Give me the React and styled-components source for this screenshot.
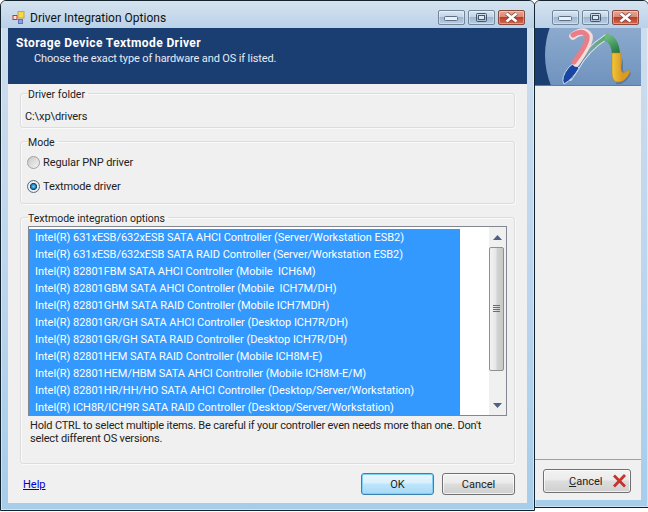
import React from 'react';
import styled, { createGlobalStyle } from 'styled-components';

const GlobalStyle = createGlobalStyle`
  html, body { margin: 0; padding: 0; background: #fff; }
  body { font-family: Roboto, "Noto Sans", sans-serif; font-size: 11px; color: #111; }
`;

const Desktop = styled.div`
  position: relative;
  width: 648px;
  height: 512px;
  overflow: hidden;
  background: #fff;
`;

const Frame = styled.div`
  position: absolute;
  top: 0;
  left: ${(p) => p.$left}px;
  width: ${(p) => p.$width}px;
  height: ${(p) => p.$height}px;
  box-sizing: border-box;
  display: flex;
  flex-direction: column;
  border: 1px solid #14242f;
  border-radius: 6px 6px 0 0;
  background: linear-gradient(180deg, #cfdeec 0, #bcd5ee 55%, #a6cdea 100%);
  box-shadow: inset 0 0 0 1px rgba(255, 255, 255, 0.45);
`;

const TitleBar = styled.div`
  flex: none;
  height: 27px;
  box-sizing: border-box;
  display: flex;
  align-items: center;
  padding: 6px 9px 0 11px;
  background: linear-gradient(180deg, #d5e3f0 0, #c8daec 50%, #b9d1e8 100%);
  border-radius: 5px 5px 0 0;
`;

const TitleText = styled.span`
  margin-left: 5px;
  font-size: 12px;
  color: #111;
`;

const CaptionGroup = styled.div`
  margin-left: auto;
  display: flex;
  gap: 3px;
`;

const CaptionBtn = styled.div`
  width: 27px;
  height: 15px;
  box-sizing: border-box;
  display: flex;
  align-items: center;
  justify-content: center;
  border: 1px solid ${(p) => (p.$close ? '#8a4a3e' : '#71859b')};
  border-radius: 2px;
  background: ${(p) =>
    p.$close
      ? 'linear-gradient(180deg, #e3a796 0, #d88a78 45%, #bf3d28 50%, #cf6a52 100%)'
      : 'linear-gradient(180deg, #dce7f2 0, #c3d4e6 45%, #9fb7d0 50%, #b9cde0 100%)'};
  box-shadow: inset 0 0 0 1px rgba(255, 255, 255, 0.35);
`;

const Client = styled.div`
  flex: 1;
  min-height: 0;
  margin: 0 7px 7px ${(p) => (p.$flush ? 0 : 7)}px;
  display: flex;
  flex-direction: column;
  background: #f0f0f0;
`;

const Banner = styled.div`
  flex: none;
  height: 56px;
  box-sizing: border-box;
  padding: 7px 8px;
  background: #1a3d72;
  color: #fff;
`;

const BannerTitle = styled.div`
  font-weight: 700;
  font-size: 12px;
  letter-spacing: 0.4px;
  line-height: 16px;
`;

const BannerSub = styled.div`
  margin-left: 18px;
  line-height: 15px;
  letter-spacing: -0.13px;
  color: #e6ecf4;
`;

const Body = styled.div`
  flex: 1;
  min-height: 0;
  padding: 2px 12px 0 12px;
  display: flex;
  flex-direction: column;
  gap: 6px;
`;

const Group = styled.fieldset`
  margin: 0;
  box-sizing: border-box;
  height: ${(p) => p.$height}px;
  min-width: 0;
  padding: 0 7px;
  border: 1px solid #dddddd;
  border-radius: 3px;
  box-shadow: inset 1px 1px 0 #fafafa, 1px 1px 0 #fafafa;
`;

const GroupLabel = styled.legend`
  padding: 2px 3px 0 0;
  font-size: 10.5px;
  line-height: 13px;
  color: #222;
`;

const PathText = styled.div`
  padding-top: 9px;
  margin-left: -3px;
  line-height: 14px;
  letter-spacing: -0.1px;
  color: #222;
`;

const RadioList = styled.div`
  padding-top: 6px;
  display: flex;
  flex-direction: column;
  gap: 10px;
`;

const RadioRow = styled.div`
  display: flex;
  align-items: center;
  gap: 3px;
  margin-left: -1px;
  height: 14px;
  letter-spacing: -0.1px;
  color: #222;
`;

const RadioDot = styled.span`
  width: 13px;
  height: 13px;
  box-sizing: border-box;
  border-radius: 50%;
  border: 1px solid ${(p) => (p.$on ? '#5a6a7a' : '#a0a0a0')};
  background: ${(p) =>
    p.$on
      ? 'radial-gradient(circle, #7fd0f0 0, #1f7fb8 28%, #123f66 42%, #f0f4f8 50%, #cfd6dc 100%)'
      : 'linear-gradient(135deg, #c8c8c8, #f4f4f4)'};
`;

const ListBox = styled.div`
  height: 190px;
  margin-top: 1px;
  box-sizing: border-box;
  display: flex;
  border: 1px solid #828790;
  background: #fff;
  overflow: hidden;
`;

const Rows = styled.div`
  flex: 1;
  min-width: 0;
  padding-top: 2px;
  overflow: hidden;
`;

const Row = styled.div`
  width: 431px;
  height: 17px;
  box-sizing: border-box;
  padding-left: 6px;
  line-height: 17px;
  letter-spacing: -0.03px;
  white-space: pre;
  background: #3399ff;
  color: #fff;
`;

const ScrollBar = styled.div`
  flex: none;
  width: 17px;
  display: flex;
  flex-direction: column;
  background: #f0f0f0;
`;

const ArrowCell = styled.div`
  flex: none;
  height: 20px;
  display: flex;
  align-items: center;
  justify-content: center;
`;

const Thumb = styled.div`
  flex: none;
  width: 15px;
  height: 124px;
  box-sizing: border-box;
  display: flex;
  align-items: center;
  justify-content: center;
  border: 1px solid #8e8f8f;
  border-radius: 2px;
  background: linear-gradient(90deg, #f3f3f3 0, #e6e6e6 45%, #d2d2d2 55%, #c8c8c8 100%);
`;

const Hint = styled.div`
  margin: 3px 0 0 2px;
  width: 465px;
  line-height: 13px;
  letter-spacing: -0.17px;
  color: #222;
`;

const FooterRow = styled.div`
  flex: none;
  height: 38px;
  padding: 0 12px 0 15px;
  display: flex;
  align-items: center;
  gap: 8px;
`;

const HelpLink = styled.a`
  margin-right: auto;
  color: #0000d0;
  text-decoration: underline;
`;

const PushButton = styled.button`
  width: ${(p) => p.$width || 73}px;
  height: ${(p) => p.$tall || 22}px;
  box-sizing: border-box;
  padding: 0;
  display: flex;
  align-items: center;
  justify-content: center;
  font-family: inherit;
  font-size: 11px;
  color: #222;
  border-radius: 3px;
  border: 1px solid ${(p) => (p.$primary ? '#3c7fb1' : '#707070')};
  background: ${(p) =>
    p.$primary
      ? 'linear-gradient(180deg, #eaf6fd 0, #d9f0fc 45%, #bee6fd 50%, #a7d9f5 100%)'
      : 'linear-gradient(180deg, #f2f2f2 0, #ebebeb 45%, #dddddd 50%, #cfcfcf 100%)'};
  box-shadow: inset 0 0 0 1px ${(p) => (p.$primary ? '#7fd0f5' : 'rgba(255,255,255,0.7)')};
`;

const SideBanner = styled.div`
  flex: none;
  height: 58px;
  background: #1a3d72;
  border-bottom: 1px solid #6b7a8a;
  box-sizing: border-box;
  line-height: 0;
`;

const SideSpacer = styled.div`
  flex: 1;
`;

const SideFooter = styled.div`
  flex: none;
  height: 41px;
  box-sizing: border-box;
  border-top: 1px solid #a0a0a0;
  padding: 9px 0 0 8px;
`;

const CancelWrap = styled.span`
  width: 100%;
  box-sizing: border-box;
  padding-left: 25px;
  display: flex;
  align-items: center;
  gap: 9px;
`;

const Mnemonic = styled.span`
  text-decoration: underline;
`;

const Min = () => (
  <svg width="15" height="7" viewBox="0 0 15 7">
    <rect x="0.5" y="2.5" width="13" height="4" rx="1" fill="#e8eff6" stroke="#5d6f84" />
  </svg>
);

const Max = () => (
  <svg width="11" height="9" viewBox="0 0 11 9">
    <rect x="0.5" y="0.5" width="10" height="8" rx="1" fill="none" stroke="#43566c" />
    <rect x="2.5" y="2.5" width="6" height="4" fill="#dfe8f1" stroke="#43566c" />
  </svg>
);

const CloseX = () => (
  <svg width="17" height="11" viewBox="0 0 17 11">
    <path d="M3.5 1.5 L13.5 9.5 M13.5 1.5 L3.5 9.5" stroke="#7a3a30" strokeWidth="4" />
    <path d="M3.5 1.5 L13.5 9.5 M13.5 1.5 L3.5 9.5" stroke="#fff" strokeWidth="2.8" />
  </svg>
);

const Caption = () => (
  <CaptionGroup>
    <CaptionBtn><Min /></CaptionBtn>
    <CaptionBtn><Max /></CaptionBtn>
    <CaptionBtn $close><CloseX /></CaptionBtn>
  </CaptionGroup>
);

const AppIcon = () => (
  <svg width="13" height="13" viewBox="0 0 13 13">
    <rect x="1" y="4.5" width="4" height="4" fill="#f6e3df" stroke="#c8321f" />
    <rect x="6" y="0.5" width="6" height="6.5" fill="#f7d648" stroke="#c9a63a" />
    <rect x="6.5" y="8.5" width="4" height="4" fill="#8f9fe0" stroke="#5f70c0" />
  </svg>
);

const Logo = () => (
  <svg width="106" height="57" viewBox="0 0 106 57">
    <defs>
      <linearGradient id="disc" x1="0" y1="0" x2="0" y2="1">
        <stop offset="0" stopColor="#a8c0dc" />
        <stop offset="1" stopColor="#557eb0" />
      </linearGradient>
      <linearGradient id="diag" gradientUnits="userSpaceOnUse" x1="36" y1="40" x2="70" y2="9">
        <stop offset="0" stopColor="#3a70b8" />
        <stop offset="0.5" stopColor="#7aa6a4" />
        <stop offset="1" stopColor="#58a868" />
      </linearGradient>
      <linearGradient id="green" gradientUnits="userSpaceOnUse" x1="70" y1="9" x2="80" y2="27">
        <stop offset="0" stopColor="#6ab880" />
        <stop offset="1" stopColor="#1a7038" />
      </linearGradient>
      <linearGradient id="yellow" gradientUnits="userSpaceOnUse" x1="74" y1="0" x2="84" y2="0">
        <stop offset="0" stopColor="#f2c73c" />
        <stop offset="1" stopColor="#dc9a22" />
      </linearGradient>
    </defs>
    <circle cx="91" cy="27" r="81" fill="url(#disc)" />
    <g transform="translate(3 0)">
      {/* shadow under the right stem */}
      <path d="M85 30 L85 42 Q86 49 93 44 L92 48 Q85 58 78 56 Z" fill="#2f4f70" opacity="0.4" />
      {/* diagonal */}
      <path d="M32 50 L38 41 Q48 22 68 9" fill="none" stroke="#eaf0f7" strokeWidth="5.5" strokeLinecap="round" opacity="0.85" />
      <path d="M33 49 L38 41 Q48 22 68 9" fill="none" stroke="url(#diag)" strokeWidth="3.5" strokeLinecap="round" />
      <path d="M26 56 Q22 50 31 39 L36 35 L41 40 Q35 51 26 56 Z" fill="#1745a4" stroke="#c9d6ea" strokeWidth="1" />
      {/* pink hook */}
      <path d="M35 8 Q46 0 51 8 Q53 14 38 35" fill="none" stroke="#f5dcdc" strokeWidth="7.5" strokeLinecap="round" />
      <path d="M35 7 Q45 1 49 8 Q51 14 36 34" fill="none" stroke="#e77e88" strokeWidth="5" strokeLinecap="round" />
      {/* green then yellow */}
      <path d="M67 9 Q77 11 78 26" fill="none" stroke="url(#green)" strokeWidth="8" strokeLinecap="butt" />
      <path d="M74 25 L83 25 L83 41 Q84 48 90 42 L92 44 Q87 55 79 54 Q74 53 74 44 Z" fill="url(#yellow)" stroke="#b98a1e" strokeWidth="0.6" />
    </g>
  </svg>
);

const UpArrow = () => (
  <svg width="9" height="5" viewBox="0 0 9 5"><path d="M0 5 L4.5 0 L9 5 Z" fill="#4d6185" /></svg>
);

const DownArrow = () => (
  <svg width="9" height="5" viewBox="0 0 9 5"><path d="M0 0 L9 0 L4.5 5 Z" fill="#4d6185" /></svg>
);

const Grip = () => (
  <svg width="7" height="8" viewBox="0 0 7 8">
    <path d="M0 0.5 H7 M0 2.5 H7 M0 4.5 H7 M0 6.5 H7" stroke="#6d6d6d" />
  </svg>
);

const RedCross = () => (
  <svg width="15" height="14" viewBox="0 0 15 14">
    <path d="M2 1.5 L13 12.5 M13 1 L2 12.5" stroke="#c8322b" strokeWidth="2.8" />
  </svg>
);

const controllers = [
  'Intel(R) 631xESB/632xESB SATA AHCI Controller (Server/Workstation ESB2)',
  'Intel(R) 631xESB/632xESB SATA RAID Controller (Server/Workstation ESB2)',
  'Intel(R) 82801FBM SATA AHCI Controller (Mobile  ICH6M)',
  'Intel(R) 82801GBM SATA AHCI Controller (Mobile  ICH7M/DH)',
  'Intel(R) 82801GHM SATA RAID Controller (Mobile ICH7MDH)',
  'Intel(R) 82801GR/GH SATA AHCI Controller (Desktop ICH7R/DH)',
  'Intel(R) 82801GR/GH SATA RAID Controller (Desktop ICH7R/DH)',
  'Intel(R) 82801HEM SATA RAID Controller (Mobile ICH8M-E)',
  'Intel(R) 82801HEM/HBM SATA AHCI Controller (Mobile ICH8M-E/M)',
  'Intel(R) 82801HR/HH/HO SATA AHCI Controller (Desktop/Server/Workstation)',
  'Intel(R) ICH8R/ICH9R SATA RAID Controller (Desktop/Server/Workstation)',
];

export default function App() {
  return (
    <Desktop>
      <GlobalStyle />
      <Frame $left={534} $width={115} $height={508}>
        <TitleBar>
          <Caption />
        </TitleBar>
        <Client $flush>
          <SideBanner><Logo /></SideBanner>
          <SideSpacer />
          <SideFooter>
            <PushButton $width={88} $tall={24}>
              <CancelWrap>
                <span><Mnemonic>C</Mnemonic>ancel</span>
                <RedCross />
              </CancelWrap>
            </PushButton>
          </SideFooter>
        </Client>
      </Frame>

      <Frame $left={0} $width={535} $height={511}>
        <TitleBar>
          <AppIcon />
          <TitleText>Driver Integration Options</TitleText>
          <Caption />
        </TitleBar>
        <Client>
          <Banner>
            <BannerTitle>Storage Device Textmode Driver</BannerTitle>
            <BannerSub>Choose the exact type of hardware and OS if listed.</BannerSub>
          </Banner>
          <Body>
            <Group $height={42}>
              <GroupLabel>Driver folder</GroupLabel>
              <PathText>C:\xp\drivers</PathText>
            </Group>
            <Group $height={70}>
              <GroupLabel>Mode</GroupLabel>
              <RadioList>
                <RadioRow><RadioDot />Regular PNP driver</RadioRow>
                <RadioRow><RadioDot $on />Textmode driver</RadioRow>
              </RadioList>
            </Group>
            <Group $height={254}>
              <GroupLabel>Textmode integration options</GroupLabel>
              <ListBox>
                <Rows>
                  {controllers.map((name) => (
                    <Row key={name}>{name}</Row>
                  ))}
                </Rows>
                <ScrollBar>
                  <ArrowCell><UpArrow /></ArrowCell>
                  <Thumb><Grip /></Thumb>
                  <SideSpacer />
                  <ArrowCell><DownArrow /></ArrowCell>
                </ScrollBar>
              </ListBox>
              <Hint>Hold CTRL to select multiple items. Be careful if your controller even needs more than one. Don't select different OS versions.</Hint>
            </Group>
          </Body>
          <FooterRow>
            <HelpLink>Help</HelpLink>
            <PushButton $primary>OK</PushButton>
            <PushButton>Cancel</PushButton>
          </FooterRow>
        </Client>
      </Frame>
    </Desktop>
  );
}
